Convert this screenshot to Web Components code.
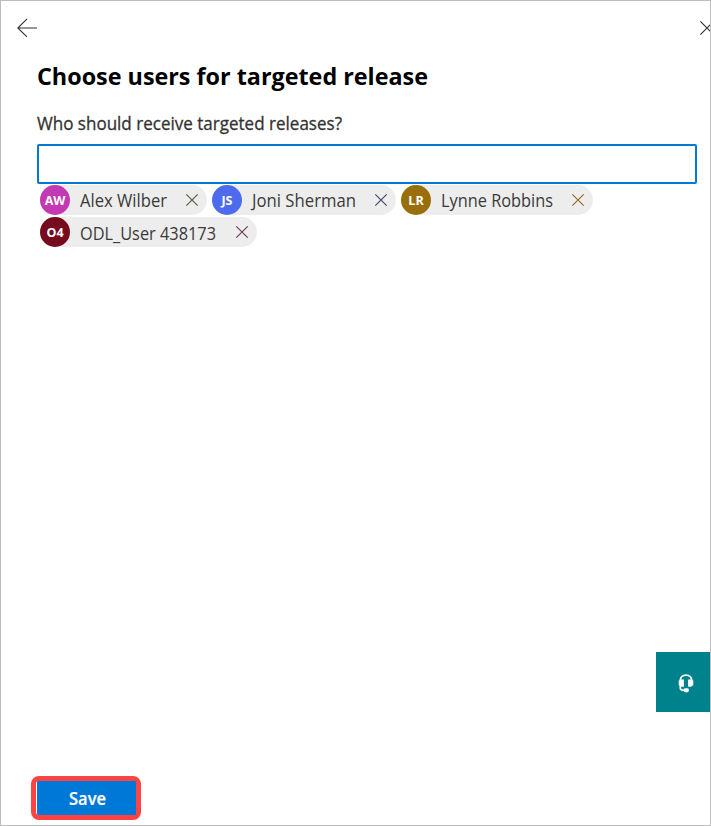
<!DOCTYPE html>
<html lang="en"><head><meta charset="utf-8"><title>Targeted release</title>
<style>html,body{margin:0;height:100%;overflow:hidden}body{font-family:"Open Sans","Noto Sans",sans-serif;background:#fff}</style></head>
<body><release-panel></release-panel>
<script>
const define = (name, html, setup) => customElements.define(name, class extends HTMLElement {
  connectedCallback() {
    if (this.shadowRoot) return;
    this.attachShadow({mode: 'open'}).innerHTML = html;
    if (setup) setup(this, this.shadowRoot);
  }
});

// Text line condensed horizontally so that it fills the width attribute.
define('fit-text', `<style>:host{display:block;white-space:nowrap}span{display:inline-block;transform-origin:0 50%}</style><span></span>`, (el, root) => {
  const s = root.querySelector('span');
  s.textContent = el.getAttribute('text');
  const w = +el.getAttribute('width');
  el.style.width = w + 'px';
  s.style.transform = `scaleX(${w / s.getBoundingClientRect().width})`;
});

define('cross-icon', `<style>:host{display:block;width:var(--s,12px);height:var(--s,12px);flex:none}svg{display:block;width:100%;height:100%;overflow:visible}path{stroke-width:var(--w,1.1)}</style>
<svg viewBox="0 0 12 12"><path d="M.3.3 11.7 11.7M11.7.3.3 11.7" fill="none" stroke="currentColor"/></svg>`);

define('user-chip', `<style>
:host{display:flex;align-items:center;box-sizing:border-box;height:30px;border-radius:15px;background:#ededed;color:#3a3a3a}
.a{width:30px;height:30px;border-radius:50%;color:#fff;display:flex;align-items:center;justify-content:center;font:700 12.5px/30px "Open Sans","Noto Sans",sans-serif;padding-top:1px;box-sizing:border-box;flex:none}
fit-text{margin-left:10px;font-size:17.5px;line-height:30px;font-weight:400;padding-top:var(--drop,0px)}
cross-icon{margin:0 9px 1px auto}</style><div class="a"></div><fit-text></fit-text><cross-icon></cross-icon>`, (el, root) => {
  const g = n => el.getAttribute(n), a = root.querySelector('.a'), t = root.querySelector('fit-text'), f = document.createElement('fit-text');
  el.style.width = g('width') + 'px';
  a.textContent = g('initials');
  a.style.background = g('color');
  f.setAttribute('text', g('name'));
  f.setAttribute('width', g('label'));
  t.replaceWith(f);
  root.querySelector('cross-icon').style.color = g('cross');
});

define('save-button', `<style>
:host{display:block;width:110px;height:44px;box-sizing:border-box;border:5px solid #ff4343;border-radius:8px;background:#fff;padding-left:1px}
button{display:flex;justify-content:center;align-items:center;width:99px;height:34px;padding:1px 0 0 1px;border:0;border-radius:1px;background:#0078d7;color:#fff;font:600 17.5px/33px "Open Sans","Noto Sans",sans-serif;-webkit-text-stroke:.2px #fff}
</style><button><fit-text text="Save" width="37"></fit-text></button>`);

define('help-button', `<style>:host{display:flex;align-items:center;justify-content:center;box-sizing:border-box;width:54px;height:60px;background:#00828c;padding:2px 0 0 6px}svg{display:block}</style>
<svg width="16" height="19" viewBox="0 0 16 19" fill="none" stroke="#fff"><path d="M2.3 8V6.5C2.3 3.3 4.8 1.1 8 1.1s5.7 2.2 5.7 5.4V8" stroke-width="1.9"/><path d="M.7 6.5h1.7l.7-1.1h2.8v7.3H3L.7 11zM15.3 6.5h-1.7l-.7-1.1h-2.8v7.3H13l2.3-1.7z" fill="#fff" stroke="none"/><path d="M2.3 11v3q0 2.2 2.4 2.2h2.7" stroke-width="1.7"/><rect x="5.8" y="14.2" width="5" height="4" rx="1.4" fill="#fff" stroke="none"/></svg>`);

define('release-panel', `<style>
:host{display:flex;flex-direction:column;box-sizing:border-box;width:711px;height:826px;border:1px solid #bdbdbd;background:#fff;overflow:hidden}
header{display:flex;justify-content:space-between;height:54px;padding:17px 0 0 16px;box-sizing:border-box;flex:none;color:#333}
header svg{display:block;flex:none}
header cross-icon{--s:14px;--w:1;margin:3px -4px 0 0}
main{padding-left:36px;flex:1}
.title{font-size:24px;line-height:34px;font-weight:700;color:#000;margin-top:4px}
.label{font-size:17.5px;line-height:24px;font-weight:500;color:#333;margin-top:18px;-webkit-text-stroke:.3px #333}
input{display:block;box-sizing:border-box;width:660px;height:40px;border:2px solid #0078d4;border-radius:2px;margin:9px 0 0;padding:0 8px;outline:0;background:#fff}
.chips{display:flex;flex-wrap:wrap;gap:2px 5px;padding:1px 0 0 3px;width:600px}
.chips user-chip:last-child{--drop:2px}
.help{display:flex;justify-content:flex-end;margin-bottom:64px}
footer{padding:0 0 5px 30px}
</style>
<header><svg width="21" height="20" viewBox="0 0 21 20" fill="none" stroke="currentColor"><path d="M.8 10H20M10 .8.8 10 10 18.9" stroke-width="1.1"/></svg><cross-icon></cross-icon></header>
<main><fit-text class="title" text="Choose users for targeted release" width="391"></fit-text>
<fit-text class="label" text="Who should receive targeted releases?" width="305"></fit-text>
<input aria-label="Users">
<div class="chips">
<user-chip name="Alex Wilber" initials="AW" color="#c239b3" cross="#55523c" width="167" label="87"></user-chip>
<user-chip name="Joni Sherman" initials="JS" color="#4f6bed" cross="#404064" width="184" label="104"></user-chip>
<user-chip name="Lynne Robbins" initials="LR" color="#986f0b" cross="#936522" width="192" label="112"></user-chip>
<user-chip name="ODL_User 438173" initials="O4" color="#750b1c" cross="#653a55" width="217" label="136"></user-chip>
</div></main>
<div class="help"><help-button></help-button></div>
<footer><save-button></save-button></footer>`);
</script></body></html>
